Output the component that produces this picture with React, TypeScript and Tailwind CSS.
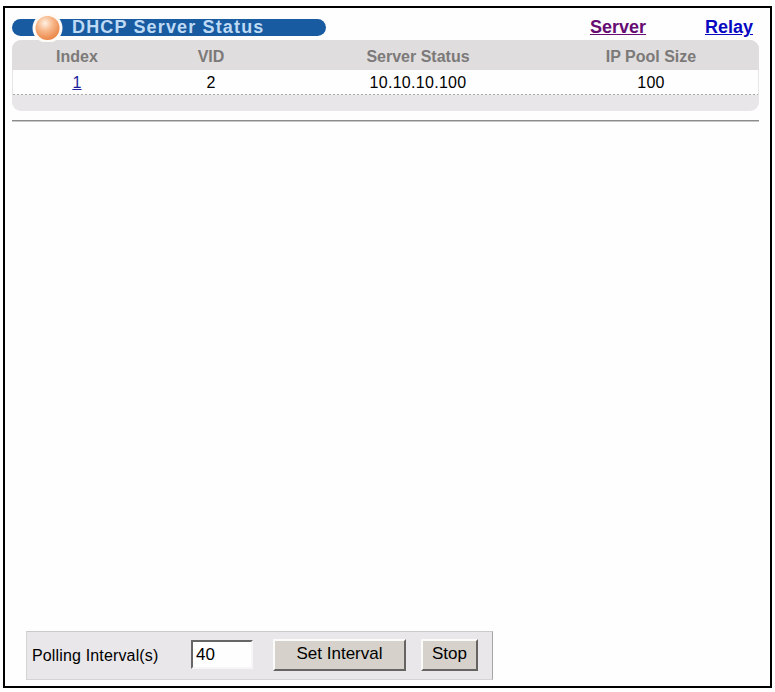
import React, { useState } from "react";

const columns = ["Index", "VID", "Server Status", "IP Pool Size"];
const servers = [{ index: 1, vid: 2, status: "10.10.10.100", poolSize: 100 }];

const rowGrid = "grid grid-cols-[130px_138px_276px_190px] text-center";

const Orb = () => (
  <svg width="32" height="28" viewBox="0 0 32 28" className="ml-5 shrink-0">
    <defs>
      <radialGradient id="orb" cx="0.4" cy="0.3" r="0.7">
        <stop offset="0" stopColor="#fff1e4" />
        <stop offset="0.45" stopColor="#f8b98c" />
        <stop offset="1" stopColor="#ea8648" />
      </radialGradient>
    </defs>
    <circle cx="15.5" cy="14" r="15" fill="#fdfaf7" />
    <circle cx="15.5" cy="14" r="12" fill="url(#orb)" />
  </svg>
);

const Header = () => (
  <div className="flex h-[17px] items-center">
    <div className="flex h-[17px] w-[314px] items-center rounded-full bg-[#195ba0]">
      <Orb />
      <h1 className="ml-[8px] whitespace-nowrap text-[18px] leading-[17px] font-bold tracking-[1.15px] text-[#bedaf5]">
        DHCP Server Status
      </h1>
    </div>
    <a href="#server" className="ml-[264px] text-[18px] leading-[19px] font-bold text-[#660c72] underline">
      Server
    </a>
    <a href="#relay" className="ml-auto mr-[6px] text-[18px] leading-[19px] font-bold text-[#0808c0] underline">
      Relay
    </a>
  </div>
);

const ServerTable = () => (
  <div className="mt-1 h-[71px] overflow-hidden rounded-[9px] bg-[#e8e6e8] px-px">
    <div className={`${rowGrid} -mx-px h-[30px] bg-[#dfdddd] text-[16px] leading-[33px] font-bold text-[#7c7979]`}>
      {columns.map((name) => (
        <span key={name}>{name}</span>
      ))}
    </div>
    {servers.map((server) => (
      <div key={server.index} className="relative h-[25px] bg-[#fefefe] text-[16px] leading-[26px] text-black">
        <div className={`${rowGrid} -ml-px tracking-[0.3px]`}>
          <a href="#detail" className="text-[#1c1c9c] underline">
            {server.index}
          </a>
          <span>{server.vid}</span>
          <span>{server.status}</span>
          <span>{server.poolSize}</span>
        </div>
        <div className="absolute inset-x-0 bottom-0 h-px bg-[repeating-linear-gradient(90deg,#a8a8a8_0_2px,#f4f4f4_2px_4px)]" />
      </div>
    ))}
  </div>
);

const buttonStyle =
  "h-8 border-2 border-t-[#fbfbfa] border-l-[#fbfbfa] border-r-[#656463] border-b-[#656463] bg-[#d6d1ca] pb-[2px] text-[17px] leading-[26px] text-black whitespace-nowrap";

const PollingForm = () => {
  const [seconds, setSeconds] = useState("40");

  return (
    <form
      onSubmit={(e) => e.preventDefault()}
      className="mb-[6px] ml-[21px] flex h-[49px] w-[467px] items-start border border-t-[#cbcacb] border-r-[#a8a7a8] border-b-[#d5d4d5] border-l-[#d5d4d5] bg-[#e9e7e9] pt-[7px]"
    >
      <label htmlFor="interval" className="ml-[5px] w-[159px] text-[16px] leading-[34px] tracking-[0.15px] text-black">
        Polling Interval(s)
      </label>
      <input
        id="interval"
        value={seconds}
        onChange={(e) => setSeconds(e.target.value)}
        className="mt-px h-[29px] w-[62px] border-2 border-t-[#666] border-r-[#f6f6f6] border-b-[#f6f6f6] border-l-[#666] bg-[#fefefe] pl-[3px] text-[17px] text-black outline-none"
      />
      <button type="button" className={`${buttonStyle} ml-[20px] w-[133px]`}>
        Set Interval
      </button>
      <button type="button" className={`${buttonStyle} ml-[15px] w-[57px]`}>
        Stop
      </button>
    </form>
  );
};

const App = () => (
  <div className="h-[692px] w-[775px] bg-white pt-[6px] pl-[3px] font-['Liberation_Sans',Arial,sans-serif]">
    <main className="flex h-[682px] w-[769px] flex-col border-2 border-black bg-[#fefefe]">
      <div className="ml-[7px] mt-[11px] w-[747px]">
        <Header />
        <ServerTable />
        <div className="mt-[9px] h-[2px] border-t border-[#8c8c8c] bg-[#c8c8c8]" />
      </div>
      <div className="grow" />
      <PollingForm />
    </main>
  </div>
);

export default App;
